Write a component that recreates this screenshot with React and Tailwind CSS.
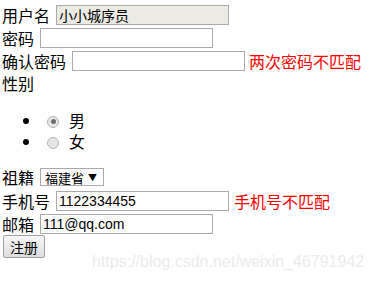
import React from 'react';

const cjk = "font-['Noto_Sans_CJK_SC',sans-serif]";
const field =
    "h-[20px] w-[173px] border border-[#a9a9a9] px-[2px] text-[14px] text-black outline-none font-['Liberation_Sans','Noto_Sans_CJK_SC',sans-serif]";

function Radio({ checked }) {
    return (
        <span className="ml-[5px] mr-[3px] inline-flex h-[12px] w-[12px] -translate-y-[1px] items-center justify-center rounded-full border border-[#b4b4b4] bg-[#e6e6e6] align-middle">
            {checked && <span className="h-[5px] w-[5px] rounded-full bg-[#6e6e6e]" />}
        </span>
    );
}

export default function App() {
    return (
        <div className={`relative h-[281px] w-[375px] overflow-hidden bg-white pl-[2px] pt-[3px] text-[16px] leading-none text-black ${cjk}`}>
            <div className="flex h-[23px] items-center">
                <span>用户名</span>
                <input
                    disabled
                    defaultValue="小小城序员"
                    className={`${field} ml-[6px] bg-[#ebebe4] text-[#6d6d6d] ${cjk}`}
                />
            </div>
            <div className="flex h-[23px] items-center">
                <span>密码</span>
                <input type="password" className={`${field} ml-[6px]`} />
            </div>
            <div className="flex h-[23px] items-center">
                <span>确认密码</span>
                <input type="password" className={`${field} ml-[6px]`} />
                <span className="ml-[4px] text-[#ff0000]">两次密码不匹配</span>
            </div>
            <div className="flex h-[22px] items-center">性别</div>

            <ul className="mb-[15px] mt-[16px] list-disc pl-[40px]">
                <li className="h-[21px] leading-[21px]">
                    <Radio checked />
                    <span className="ml-[7px]">男</span>
                </li>
                <li className="h-[21px] leading-[21px]">
                    <Radio />
                    <span className="ml-[7px]">女</span>
                </li>
            </ul>

            <div className="flex h-[20px] items-center">
                <span>祖籍</span>
                <div className="ml-[6px] flex h-[18px] w-[64px] items-center justify-between border border-[#a9a9a9] pl-[4px] pr-[6px] text-[13px]">
                    <span>福建省</span>
                    <span className="text-[9px]">▼</span>
                </div>
            </div>
            <div className="mt-[2px] flex h-[23px] items-center">
                <span>手机号</span>
                <input defaultValue="1122334455" className={`${field} ml-[6px]`} />
                <span className="ml-[5px] text-[#ff0000]">手机号不匹配</span>
            </div>
            <div className="flex h-[23px] items-center">
                <span>邮箱</span>
                <input defaultValue="111@qq.com" className={`${field} ml-[6px]`} />
            </div>
            <button className="ml-[1px] h-[23px] w-[42px] rounded-[2px] border border-[#a0a0a0] bg-gradient-to-b from-[#f6f6f6] to-[#dedede] text-[14px]">
                注册
            </button>

            <span className="pointer-events-none absolute left-[92px] top-[254px] whitespace-nowrap text-[16px] text-[#ebebeb] font-['Liberation_Sans',sans-serif]">
                https://blog.csdn.net/weixin_46791942
            </span>
        </div>
    );
}
